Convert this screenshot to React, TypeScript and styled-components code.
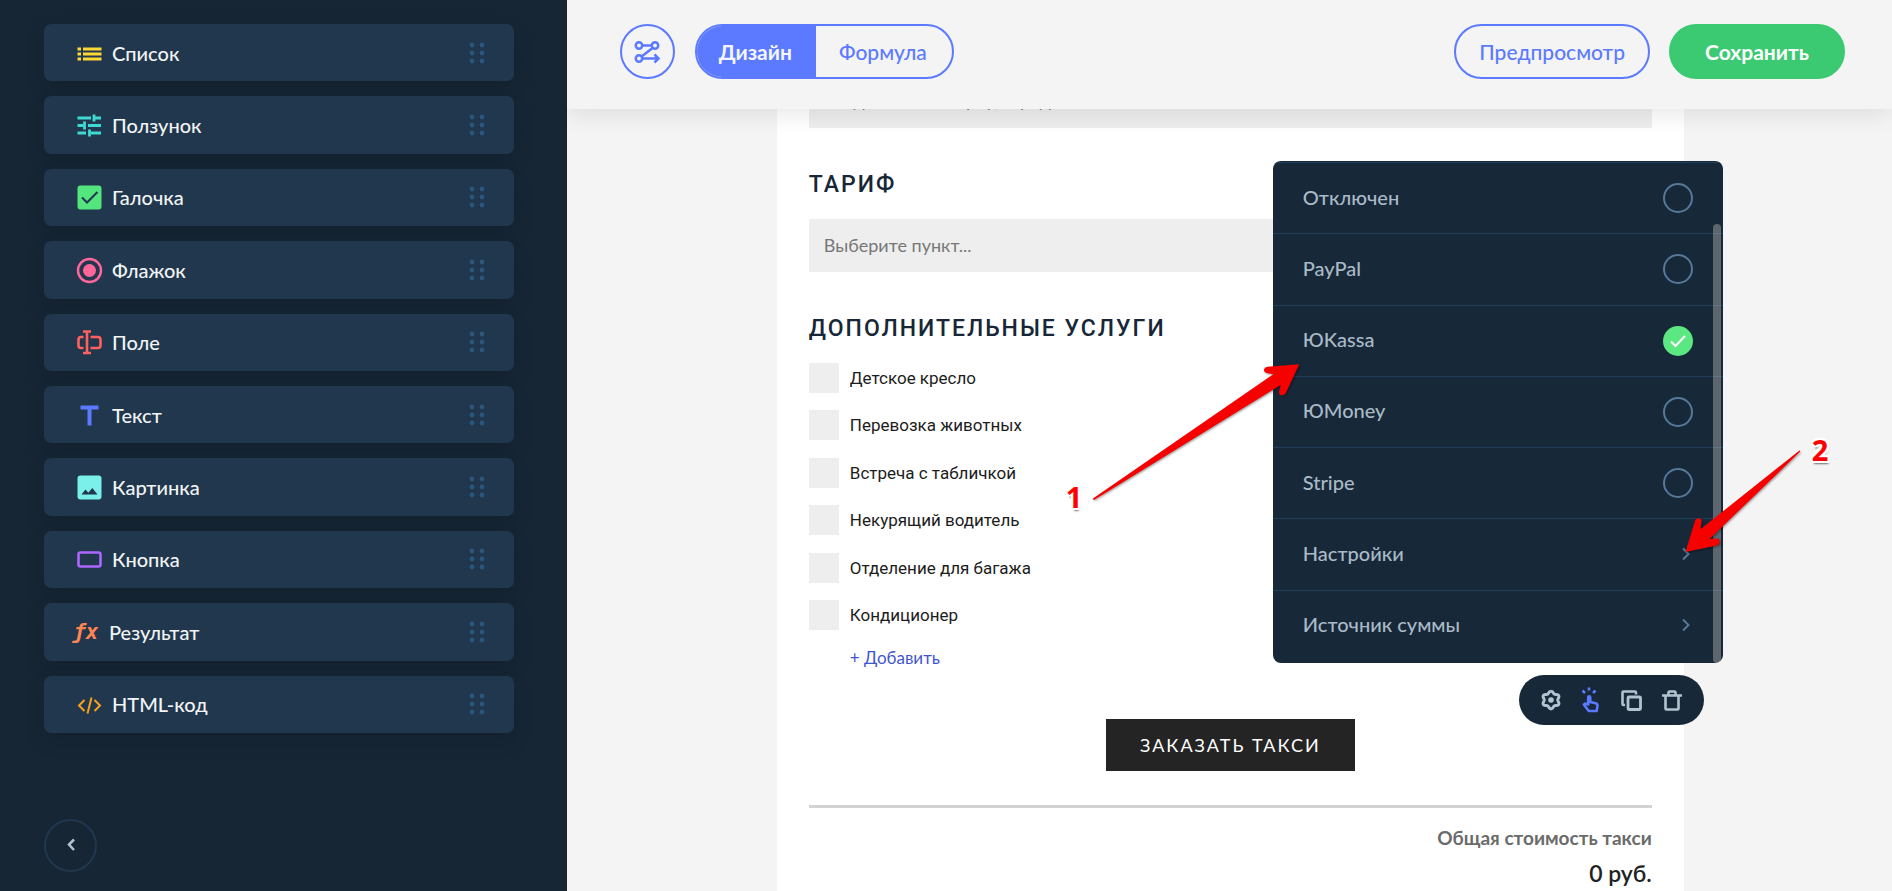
import React from "react";
import styled, { createGlobalStyle } from "styled-components";

const color = {
  night: "#162635",
  panel: "#172838",
  tile: "#20374d",
  line: "#1f3e5b",
  grip: "#2b567c",
  blue: "#5b7aff",
  green: "#3bc972",
  page: "#f4f4f4",
  field: "#eeeeee",
  mist: "#a9bac7",
  steel: "#56799a",
};

const sans = `Lato, "Open Sans", sans-serif`;

const GlobalStyle = createGlobalStyle`
  *, *::before, *::after { box-sizing: border-box; }
  body { margin: 0; background: ${color.page}; font-family: ${sans}; }
  button, input, select { font: inherit; color: inherit; }
  button { margin: 0; padding: 0; border: 0; background: none; cursor: pointer; }
  svg { display: block; overflow: visible; flex: none; }
`;

const Shell = styled.div`
  display: flex;
  height: 100vh;
  overflow: hidden;
`;

/* ---------- Sidebar ---------- */

const Sidebar = styled.aside`
  display: flex;
  flex: 0 0 29.95%;
  flex-direction: column;
  padding: 24px 53px 19px 44px;
  background: ${color.night};
`;

const ToolList = styled.ul`
  display: grid;
  grid-auto-rows: 1fr;
  gap: 15px;
  min-height: 709px;
  margin: 0;
  padding: 0;
  list-style: none;
`;

const ToolTile = styled.button`
  display: flex;
  align-items: center;
  gap: 10px;
  width: 100%;
  height: 100%;
  padding: 0 29px 0 32px;
  border-radius: 7px;
  background: ${color.tile};
  box-shadow: 0 8px 20px rgba(0, 0, 0, 0.12);
  color: #f1f3f5;
  font-size: 20px;
  font-weight: 500;
  line-height: 26px;
  text-align: left;
`;

const ToolName = styled.span`
  flex: 1;
`;

const FxMark = styled.span`
  width: 26px;
  margin-left: -3px;
  color: #ff8552;
  font: italic 700 21px/26px "DejaVu Sans Mono", monospace;
`;

const RoundButton = styled.button`
  display: flex;
  align-items: center;
  justify-content: center;
  width: 53px;
  height: 53px;
  margin-top: auto;
  border: 2px solid ${color.tile};
  border-radius: 50%;
  color: #b4c3cf;
`;

/* ---------- Top bar ---------- */

const Main = styled.main`
  display: flex;
  flex: 1;
  flex-direction: column;
  min-width: 0;
  overflow: hidden;
`;

const TopBar = styled.header`
  position: relative;
  z-index: 2;
  display: flex;
  flex: none;
  align-items: center;
  height: 109px;
  padding: 0 47px 6px 53px;
  background: ${color.page};
  box-shadow: 0 6px 22px rgba(0, 0, 0, 0.09);
`;

const FlowButton = styled.button`
  display: flex;
  align-items: center;
  justify-content: center;
  width: 55px;
  height: 55px;
  border: 2px solid ${color.blue};
  border-radius: 50%;
`;

const Segments = styled.div`
  display: flex;
  height: 55px;
  margin-left: 20px;
  overflow: hidden;
  border: 2px solid ${color.blue};
  border-radius: 28px;
`;

const Segment = styled.button<{ $active?: boolean }>`
  padding: ${(p) => (p.$active ? "0 24px 0 22px" : "0 25px 0 23px")};
  background: ${(p) => (p.$active ? color.blue : "transparent")};
  color: ${(p) => (p.$active ? "#f4f6ff" : color.blue)};
  font-size: 21px;
  font-weight: ${(p) => (p.$active ? 700 : 500)};
`;

const PillButton = styled.button<{ $solid?: boolean }>`
  height: 55px;
  margin-left: ${(p) => (p.$solid ? "19px" : "auto")};
  padding: ${(p) => (p.$solid ? "0 34px" : "0 23px")};
  border: 2px solid ${(p) => (p.$solid ? color.green : color.blue)};
  border-radius: 28px;
  background: ${(p) => (p.$solid ? color.green : "transparent")};
  color: ${(p) => (p.$solid ? "#fff" : color.blue)};
  font-size: 21px;
  font-weight: ${(p) => (p.$solid ? 700 : 500)};
`;

/* ---------- Form on the canvas ---------- */

const Canvas = styled.section`
  flex: 1;
  min-height: 0;
  padding-left: 2px;
  overflow: hidden;
`;

const Paper = styled.form`
  width: 100%;
  max-width: 907px;
  margin: -66px auto 0;
  padding: 32px;
  background: #fff;
`;

const TextField = styled.input`
  display: block;
  width: 100%;
  height: 53px;
  padding: 0 15px 4px;
  border: 0;
  background: ${color.field};
  font-size: 18px;
  &::placeholder { color: #777; opacity: 1; }
`;

const Heading = styled.h2`
  margin: 43px 0 20px;
  color: #172738;
  font: 500 23px/28px Roboto, sans-serif;
  letter-spacing: 2px;
  text-transform: uppercase;
`;

const SelectField = styled.select`
  display: block;
  width: 100%;
  height: 53px;
  padding: 0 15px 2px;
  appearance: none;
  border: 0;
  border-radius: 0;
  background: ${color.field};
  color: #777;
  font-size: 18px;
`;

const OptionList = styled.div`
  display: flex;
  flex-direction: column;
  justify-content: space-between;
  min-height: 267px;
`;

const Option = styled.label`
  display: flex;
  align-items: center;
  gap: 11px;
  color: #1c1c1c;
  font: 400 17px/30px Roboto, sans-serif;
`;

const Box = styled.input`
  width: 30px;
  height: 30px;
  margin: 0;
  appearance: none;
  background: ${color.field};
  &:checked { background: ${color.green}; }
`;

const AddButton = styled.button`
  display: block;
  margin: 16px 0 0 41px;
  color: #3f56cf;
  font-size: 17px;
  line-height: 24px;
`;

const OrderRow = styled.div`
  position: relative;
  display: flex;
  justify-content: center;
  margin-top: 49px;
`;

const OrderButton = styled.button`
  height: 52px;
  padding: 0 34px;
  background: #242424;
  color: #fff;
  font-size: 18px;
  letter-spacing: 2px;
  text-transform: uppercase;
`;

const Total = styled.div`
  margin-top: 34px;
  padding-top: 18px;
  border-top: 3px solid #d3d3d3;
  text-align: right;
`;

const TotalLabel = styled.div`
  color: #6b6b6b;
  font-size: 19px;
  font-weight: 700;
  line-height: 24px;
`;

const TotalValue = styled.div`
  margin-top: 8px;
  color: #222;
  font-size: 23px;
  font-weight: 600;
  line-height: 30px;
`;

/* ---------- Floating widget controls ---------- */

const WidgetBar = styled.div`
  position: absolute;
  right: -52px;
  bottom: calc(100% - 6px);
  display: flex;
  align-items: center;
  justify-content: center;
  width: 185px;
  height: 50px;
  border-radius: 25px;
  background: ${color.panel};
`;

const WidgetButton = styled.button`
  display: flex;
  align-items: center;
  justify-content: center;
  width: 40px;
  height: 40px;
`;

const MenuAnchor = styled.div`
  position: absolute;
  right: -71px;
  bottom: calc(100% + 56px);
  width: 450px;
`;

const Menu = styled.div`
  display: grid;
  grid-auto-rows: 1fr;
  min-height: 502px;
  padding: 1px 0 2px;
  overflow: hidden;
  border-radius: 8px;
  background: ${color.panel};
  color: ${color.mist};
  font-size: 20px;
  font-weight: 500;
`;

const MenuRow = styled.label`
  display: flex;
  align-items: center;
  justify-content: space-between;
  padding: 0 30px;
  border-top: 1px solid ${color.line};
`;

const MenuText = styled.span`
  padding-bottom: 3px;
`;

const MenuLink = styled(MenuRow).attrs({ as: "button", type: "button" })`
  border-width: 1px 0 0;
  border-style: solid;
  padding-right: 33px;
`;

const Radio = styled.input`
  width: 30px;
  height: 30px;
  margin: 0;
  appearance: none;
  border: 2px solid ${color.steel};
  border-radius: 50%;
  &:checked {
    border: 0;
    background: #5be781 url("data:image/svg+xml,%3Csvg xmlns='http://www.w3.org/2000/svg' viewBox='0 0 30 30'%3E%3Cpath d='M8 15.500l4.500 4.500 9.500-10' fill='none' stroke='white' stroke-width='2'/%3E%3C/svg%3E");
  }
`;

const ScrollThumb = styled.div`
  position: absolute;
  top: 63px;
  right: 2px;
  bottom: 0;
  width: 8px;
  border-radius: 4px;
  background: rgba(255, 248, 235, 0.3);
`;

/* ---------- Step pointers ---------- */

const Pointer = styled.svg<{ $left: number; $top: number }>`
  position: absolute;
  left: ${(p) => p.$left}px;
  top: ${(p) => p.$top}px;
  pointer-events: none;
  filter: drop-shadow(1px 1px 1px rgba(0, 0, 0, 0.4));
`;

const StepNumber = styled.span<{ $left: number; $top: number }>`
  position: absolute;
  left: ${(p) => p.$left}px;
  top: ${(p) => p.$top}px;
  color: #f00;
  font: 700 29px/30px "Open Sans", sans-serif;
  text-shadow: -2px 0 #fff, 2px 0 #fff, 0 -2px #fff, 0 2px #fff, -2px -2px #fff,
    2px -2px #fff, -2px 2px #fff, 2px 2px #fff, 1px 3px 2px rgba(0, 0, 0, 0.55);
`;

/* ---------- Icons ---------- */

const Icon = ({ tint, children }: { tint: string; children: React.ReactNode }) => (
  <svg width="26" height="26" viewBox="0 0 26 26" fill="none" stroke={tint} strokeWidth="2" aria-hidden="true">
    {children}
  </svg>
);

const Grip = () => (
  <svg width="16" height="22" viewBox="0 0 16 22" fill={color.grip} aria-hidden="true">
    {[3, 11, 19].map((y) => (
      <React.Fragment key={y}>
        <circle cx="3" cy={y} r="2.400" />
        <circle cx="13" cy={y} r="2.400" />
      </React.Fragment>
    ))}
  </svg>
);

const Chevron = ({ back }: { back?: boolean }) => (
  <svg width="8" height="12" viewBox="0 0 8 12" fill="none" stroke={back ? "#b4c3cf" : color.steel} strokeWidth={back ? 2.5 : 2} aria-hidden="true">
    <path d={back ? "M7 -.5L2 4.500l5 5.500" : "M1 -.5L6.500 5 1 10.500"} />
  </svg>
);

const FlowIcon = () => (
  <svg width="26" height="24" viewBox="0 0 26 24" fill="none" stroke={color.blue} strokeWidth="2.500" aria-hidden="true">
    <circle cx="5" cy="5.500" r="3.200" />
    <circle cx="21" cy="5.500" r="3.200" />
    <circle cx="5" cy="18.500" r="3.200" />
    <path d="M8.200 5.500h9.600M18.600 7.900L7.600 16.500M8.200 18.500h15.500M20.500 14.500l4 4-4 4" />
  </svg>
);

const gearPath = Array.from({ length: 73 }, (_, i) => {
  const a = (i / 72) * Math.PI * 2;
  const r = 7.8 + 1.1 * Math.cos(6 * a);
  return `${i ? "L" : "M"}${(13 + r * Math.sin(a)).toFixed(2)} ${(13 - r * Math.cos(a)).toFixed(2)}`;
}).join("");

const tools: { name: string; icon: React.ReactNode }[] = [
  {
    name: "Список",
    icon: (
      <Icon tint="#fdd835">
        <path d="M1.500 9h3.500M7 9h18.500M1.500 14h3.500M7 14h18.500M1.500 19h3.500M7 19h18.500" strokeWidth="2.800" />
      </Icon>
    ),
  },
  {
    name: "Ползунок",
    icon: (
      <Icon tint="#3fd9d4">
        <path d="M1.500 6H15M19 6h6M18 2.500v7M1.500 13.500H7M12 13.500h13M8.500 9.500v8M1.500 21H10M15 21h10M13.500 17.500v7" strokeWidth="2.800" />
      </Icon>
    ),
  },
  {
    name: "Галочка",
    icon: (
      <Icon tint={color.tile}>
        <rect x="1.500" y="1.500" width="24" height="24" rx="3" fill="#55e57e" stroke="none" />
        <path d="M6 13.500l5 5L21.500 8" />
      </Icon>
    ),
  },
  {
    name: "Флажок",
    icon: (
      <Icon tint="#ff6699">
        <circle cx="13.500" cy="13.500" r="11.500" strokeWidth="2.400" />
        <circle cx="13.500" cy="13.500" r="6.500" fill="#ff6699" stroke="none" />
      </Icon>
    ),
  },
  {
    name: "Поле",
    icon: (
      <Icon tint="#ff6060">
        <path d="M7 2.500h8M7 24h8M11 2.500V24" strokeWidth="2.600" />
        <path d="M7.500 8H5a2.500 2.500 0 0 0-2.500 2.500v6A2.500 2.500 0 0 0 5 19h2.500M14.500 8H22a2.500 2.500 0 0 1 2.500 2.500v6A2.500 2.500 0 0 1 22 19h-7.500" strokeWidth="2.600" />
      </Icon>
    ),
  },
  {
    name: "Текст",
    icon: (
      <Icon tint="#5b7aff">
        <path d="M4.500 5.500h18M13.500 5.500v18" strokeWidth="4" />
      </Icon>
    ),
  },
  {
    name: "Картинка",
    icon: (
      <Icon tint="none">
        <rect x="1.500" y="1.500" width="24" height="24" rx="3" fill="#7bf0ea" />
        <path d="M5.500 20.500l4-5 2.800 3.200 4-4.700 5.200 6.500z" fill={color.tile} />
      </Icon>
    ),
  },
  {
    name: "Кнопка",
    icon: (
      <Icon tint="#ad66ff">
        <rect x="2.500" y="6.500" width="22" height="14" rx="2" strokeWidth="2.600" />
      </Icon>
    ),
  },
  { name: "Результат", icon: <FxMark aria-hidden="true">ƒx</FxMark> },
  {
    name: "HTML-код",
    icon: (
      <Icon tint="#f9a11b">
        <path d="M8.500 9L3 14.500 8.500 20M18.500 9l5.500 5.500-5.500 5.500M15.500 6.500l-4 16" />
      </Icon>
    ),
  },
];

const extras = [
  "Детское кресло",
  "Перевозка животных",
  "Встреча с табличкой",
  "Некурящий водитель",
  "Отделение для багажа",
  "Кондиционер",
];

const payments = ["Отключен", "PayPal", "ЮKassa", "ЮMoney", "Stripe"];

const widgetActions: { label: string; icon: React.ReactNode }[] = [
  {
    label: "Параметры",
    icon: (
      <Icon tint="#b3c2cf">
        <path d={gearPath} strokeWidth="2.900" />
        <circle cx="13" cy="13" r="2.800" fill="#b3c2cf" stroke="none" />
      </Icon>
    ),
  },
  {
    label: "Оплата",
    icon: (
      <Icon tint="#5b7aff">
        <g strokeWidth="2.600" strokeLinejoin="round">
          <path d="M11 .5v3M4.500 3.500l2.500 2.500M17.500 3.500L15 6" />
          <path d="M10.200 17.500v-7.300a1 1 0 0 1 2 0v4.800l5.300 1.300c1.500.4 2.200 1.300 2 2.800l-.9 4.900h-7.800l-5-6.500 1.500-.9z" />
        </g>
      </Icon>
    ),
  },
  {
    label: "Копировать",
    icon: (
      <Icon tint="#b3c2cf">
        <path d="M18 7.500V5.500a1 1 0 0 0-1-1H5.500a1 1 0 0 0-1 1V17a1 1 0 0 0 1 1H7" strokeWidth="2.600" />
        <rect x="10" y="10" width="12.500" height="12.500" rx="1" strokeWidth="2.800" />
      </Icon>
    ),
  },
  {
    label: "Удалить",
    icon: (
      <Icon tint="#b3c2cf">
        <path d="M4 8.500h20M10.500 8V5.500a1 1 0 0 1 1-1h5a1 1 0 0 1 1 1V8M7.500 8.500v13a1 1 0 0 0 1 1h11a1 1 0 0 0 1-1v-13" strokeWidth="2.600" />
      </Icon>
    ),
  },
];

const StepPointers = () => (
  <>
    <Pointer $left={-190} $top={190} width="230" height="160" viewBox="0 0 230 160" aria-hidden="true">
      <path
        fill="#f60000"
        d="M10.300 147.300L190.300 23.300 184.500 22.300Q181 21.500 181 19T184.500 15.700L216.300 13.300 203 41.700Q201.500 44.500 198.700 44.300T196 40.700L197.700 34 11 149Q9.500 148.500 10.300 147.300Z"
      />
    </Pointer>
    <StepNumber $left={-207} $top={321}>1</StepNumber>
    <Pointer $left={403} $top={270} width="133" height="130" viewBox="0 0 133 130" aria-hidden="true">
      <path
        fill="#f60000"
        d="M123.500 19.500L24.400 98.300 25.700 90Q25.500 87.300 22.500 87.300T19 90L9.400 121 41 114.500Q43.700 113.500 43.700 110.700T41 107.500L33.600 108 123.800 21Q124.500 20 123.500 19.500Z"
      />
    </Pointer>
    <StepNumber $left={539} $top={274}>2</StepNumber>
  </>
);

export default function App() {
  return (
    <>
      <GlobalStyle />
      <Shell>
        <Sidebar>
          <ToolList>
            {tools.map((tool) => (
              <li key={tool.name}>
                <ToolTile type="button">
                  {tool.icon}
                  <ToolName>{tool.name}</ToolName>
                  <Grip />
                </ToolTile>
              </li>
            ))}
          </ToolList>
          <RoundButton type="button" aria-label="Назад">
            <Chevron back />
          </RoundButton>
        </Sidebar>

        <Main>
          <TopBar>
            <FlowButton type="button" aria-label="Связи">
              <FlowIcon />
            </FlowButton>
            <Segments>
              <Segment type="button" $active>Дизайн</Segment>
              <Segment type="button">Формула</Segment>
            </Segments>
            <PillButton type="button">Предпросмотр</PillButton>
            <PillButton type="button" $solid>Сохранить</PillButton>
          </TopBar>

          <Canvas>
            <Paper>
              <TextField aria-label="Адрес" placeholder="Введите свою марку, город" />

              <Heading id="tariff">Тариф</Heading>
              <SelectField aria-labelledby="tariff" defaultValue="">
                <option value="">Выберите пункт...</option>
              </SelectField>

              <Heading>Дополнительные услуги</Heading>
              <OptionList>
                {extras.map((extra) => (
                  <Option key={extra}>
                    <Box type="checkbox" />
                    {extra}
                  </Option>
                ))}
              </OptionList>
              <AddButton type="button">+ Добавить</AddButton>

              <OrderRow>
                <OrderButton type="button">Заказать такси</OrderButton>
                <WidgetBar>
                  {widgetActions.map((action) => (
                    <WidgetButton key={action.label} type="button" aria-label={action.label}>
                      {action.icon}
                    </WidgetButton>
                  ))}
                </WidgetBar>
                <MenuAnchor>
                  <Menu>
                    {payments.map((name) => (
                      <MenuRow key={name}>
                        <MenuText>{name}</MenuText>
                        <Radio type="radio" name="payment" defaultChecked={name === "ЮKassa"} />
                      </MenuRow>
                    ))}
                    <MenuLink>
                      <MenuText>Настройки</MenuText>
                      <Chevron />
                    </MenuLink>
                    <MenuLink>
                      <MenuText>Источник суммы</MenuText>
                      <Chevron />
                    </MenuLink>
                  </Menu>
                  <ScrollThumb />
                  <StepPointers />
                </MenuAnchor>
              </OrderRow>

              <Total>
                <TotalLabel>Общая стоимость такси</TotalLabel>
                <TotalValue>0 руб.</TotalValue>
              </Total>
            </Paper>
          </Canvas>
        </Main>
      </Shell>
    </>
  );
}
